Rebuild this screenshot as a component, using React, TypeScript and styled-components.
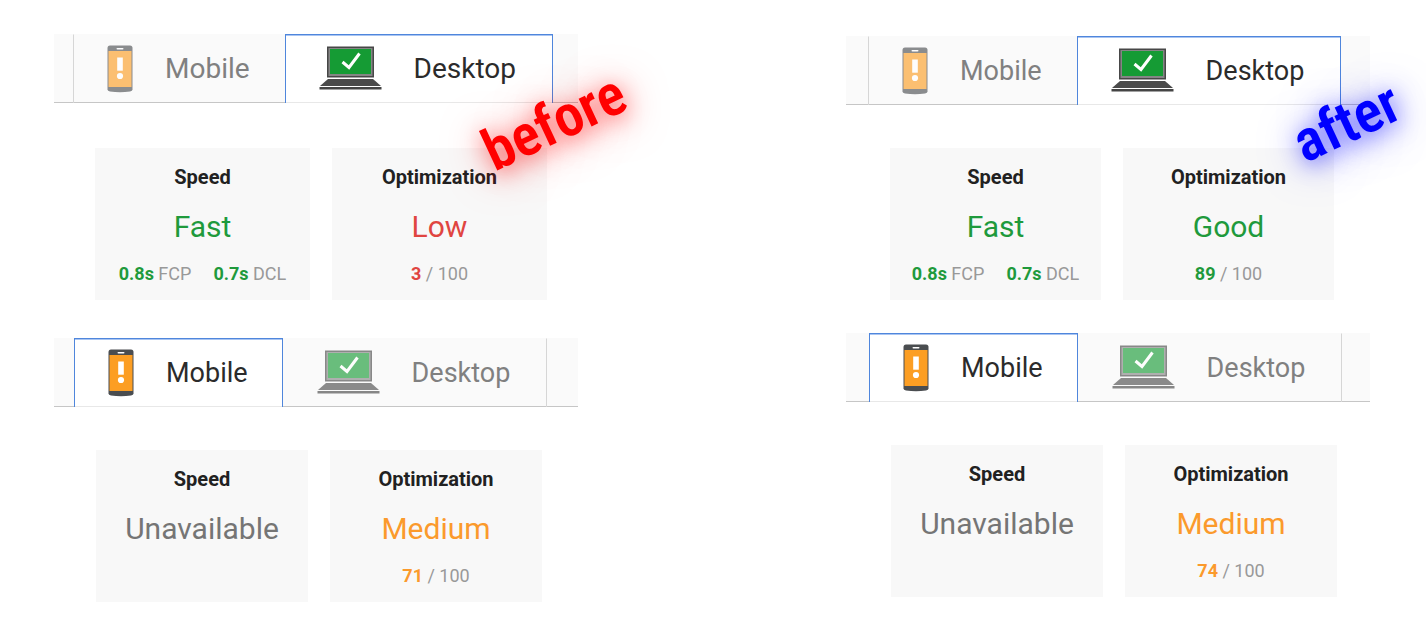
import React, { useState } from 'react';
import styled, { createGlobalStyle, css } from 'styled-components';

const GlobalStyle = createGlobalStyle`
  * { box-sizing: border-box; }
  body {
    margin: 0;
    background: #fff;
    color: #212121;
    font-family: Roboto, 'Liberation Sans', sans-serif;
  }
`;

const Page = styled.main`
  display: grid;
  grid-template-columns: 1fr 1fr;
  gap: 268px;
  padding: 34px 56px 36px 54px;
`;

const Column = styled.section<{ $gap: number; $top: number }>`
  position: relative;
  display: flex;
  flex-direction: column;
  gap: ${(p) => p.$gap}px;
  padding-top: ${(p) => p.$top}px;
`;

const TabBar = styled.div<{ $inset: number }>`
  display: flex;
  height: 69px;
  padding-left: ${(p) => p.$inset}px;
  background: #fafafa;
  box-shadow: inset 0 -1px #c6c6c6;
`;

const Tab = styled.button<{ $size: number }>`
  display: flex;
  align-items: center;
  gap: 32px;
  padding: 0 34px 0 33px;
  border: 1px solid transparent;
  border-left-color: #d6d6d6;
  border-bottom: 0;
  background: transparent;
  color: #808080;
  font-family: inherit;
  font-size: ${(p) => p.$size}px;
  line-height: 32px;
  cursor: pointer;

  svg {
    flex: none;
    opacity: 0.63;
  }

  & + & {
    padding-right: 36px;
    border-left-color: transparent;
    border-right-color: #d6d6d6;
  }

  &&[aria-selected='true'] {
    border-color: #4f86dc;
    background: #fff;
    color: #2b2b2b;
    box-shadow: inset 0 1px #a9c5f2, inset 0 -1px #e8e8e8;

    svg {
      opacity: 1;
    }
  }
`;

const Cards = styled.div<{ $top: number; $left: number; $right: number }>`
  display: grid;
  grid-template-columns: 1fr 1fr;
  gap: 22px;
  padding: ${(p) => p.$top}px ${(p) => p.$right}px 0 ${(p) => p.$left}px;
`;

const Card = styled.article`
  min-height: 152px;
  padding: 17px 8px 15px;
  background: #f8f8f8;
  text-align: center;
`;

const CardTitle = styled.h2`
  margin: 0 0 20px;
  font-size: 20px;
  font-weight: 700;
  line-height: 24px;
`;

const tones = { good: '#1f9a3c', medium: '#fb9a2c', low: '#e04541', none: '#757575' };
type Tone = keyof typeof tones;

const Verdict = styled.p<{ $tone: Tone }>`
  margin: 0 0 18px;
  color: ${(p) => tones[p.$tone]};
  font-size: 30px;
  line-height: 36px;
`;

const Metrics = styled.p`
  display: flex;
  justify-content: center;
  gap: 22px;
  margin: 0;
  color: #999;
  font-size: 18px;
  line-height: 22px;
  white-space: nowrap;
`;

const Figure = styled.strong<{ $tone: Tone }>`
  color: ${(p) => tones[p.$tone]};
  font-weight: 700;
`;

const Stamp = styled.span<{ $kind: 'before' | 'after' }>`
  position: absolute;
  top: 88px;
  right: 24px;
  font-family: 'Liberation Sans Narrow', 'Roboto Condensed', 'DejaVu Sans Condensed', sans-serif;
  font-weight: 600;
  font-size: 58px;
  line-height: 60px;
  transform: translate(50%, -50%) rotate(-25deg);
  pointer-events: none;
  ${(p) =>
    p.$kind === 'before'
      ? css`
          color: #f00;
          text-shadow: 0 4px 20px rgba(255, 0, 0, 0.5), 0 4px 40px rgba(255, 0, 0, 0.5);
        `
      : css`
          color: #00f;
          text-shadow: 0 4px 20px rgba(0, 0, 255, 0.5), 0 4px 40px rgba(0, 0, 255, 0.5);
        `}
`;

const PhoneIcon = () => (
  <svg width="26" height="48" viewBox="0 0 26 48" aria-hidden="true">
    <path d="M3 .5H23Q25.5 .5 25.5 3V44.5Q25.5 46 23 46.5Q13 48 3 46.5Q.5 46 .5 44.5V3Q.5 .5 3 .5Z" fill="#4a4d50" />
    <rect x="1.5" y="6" width="23" height="36" fill="#fc9e23" />
    <rect x="9.5" y="3" width="7" height="1.6" rx=".8" fill="#fff" />
    <rect x="10.2" y="12.5" width="5.6" height="13.2" fill="#fff" />
    <circle cx="13" cy="31" r="3.1" fill="#fff" />
  </svg>
);

const LaptopIcon = () => (
  <svg width="63" height="47" viewBox="0 0 63 47" aria-hidden="true">
    <rect x="8" y=".5" width="47" height="31" fill="#474747" />
    <rect x="9.5" y="2" width="44" height="28" fill="#858585" />
    <rect x="11" y="3" width="41" height="25" fill="#159b34" />
    <path d="M23.5 16L30 21.5L40.5 7.5" fill="none" stroke="#fff" strokeWidth="3" />
    <path d="M9 33H54L62 40H1Z" fill="#4a4a4a" />
    <path d="M.5 41H62.5V43.5H.5Z" fill="#444" />
  </svg>
);

type Metric = { value: string; label: string };
type Result = { title: string; verdict: string; tone: Tone; metrics: Metric[] };
type Device = 'mobile' | 'desktop';

interface ReportProps {
  name: string;
  device: Device;
  size: number;
  inset: number;
  top: number;
  left: number;
  right: number;
  results: Result[];
}

function Report({ name, device, size, inset, top, left, right, results }: ReportProps) {
  const [active, setActive] = useState<Device>(device);
  return (
    <div>
      <TabBar role="tablist" aria-label={name} $inset={inset}>
        <Tab role="tab" $size={size} aria-selected={active === 'mobile'} onClick={() => setActive('mobile')}>
          <PhoneIcon />
          Mobile
        </Tab>
        <Tab role="tab" $size={size} aria-selected={active === 'desktop'} onClick={() => setActive('desktop')}>
          <LaptopIcon />
          Desktop
        </Tab>
      </TabBar>
      <Cards $top={top} $left={left} $right={right}>
        {results.map((r) => (
          <Card key={r.title}>
            <CardTitle>{r.title}</CardTitle>
            <Verdict $tone={r.tone}>{r.verdict}</Verdict>
            <Metrics>
              {r.metrics.map((m) => (
                <span key={m.label}>
                  <Figure $tone={r.tone}>{m.value}</Figure> {m.label}
                </span>
              ))}
            </Metrics>
          </Card>
        ))}
      </Cards>
    </div>
  );
}

const fast: Result = {
  title: 'Speed',
  verdict: 'Fast',
  tone: 'good',
  metrics: [
    { value: '0.8s', label: 'FCP' },
    { value: '0.7s', label: 'DCL' },
  ],
};
const unavailable: Result = { title: 'Speed', verdict: 'Unavailable', tone: 'none', metrics: [] };
const optimization = (verdict: string, tone: Tone, value: string): Result => ({
  title: 'Optimization',
  verdict,
  tone,
  metrics: [{ value, label: '/ 100' }],
});

export default function App() {
  return (
    <>
      <GlobalStyle />
      <Page>
        <Column $gap={38} $top={0}>
          <Report name="Desktop before" device="desktop" size={28} inset={19} top={45} left={41} right={31}
            results={[fast, optimization('Low', 'low', '3')]} />
          <Report name="Mobile before" device="mobile" size={27} inset={20} top={43} left={42} right={36}
            results={[unavailable, optimization('Medium', 'medium', '71')]} />
          <Stamp $kind="before">before</Stamp>
        </Column>
        <Column $gap={33} $top={2}>
          <Report name="Desktop after" device="desktop" size={27} inset={22} top={43} left={44} right={36}
            results={[fast, optimization('Good', 'good', '89')]} />
          <Report name="Mobile after" device="mobile" size={27} inset={23} top={43} left={45} right={33}
            results={[unavailable, optimization('Medium', 'medium', '74')]} />
          <Stamp $kind="after">after</Stamp>
        </Column>
      </Page>
    </>
  );
}
